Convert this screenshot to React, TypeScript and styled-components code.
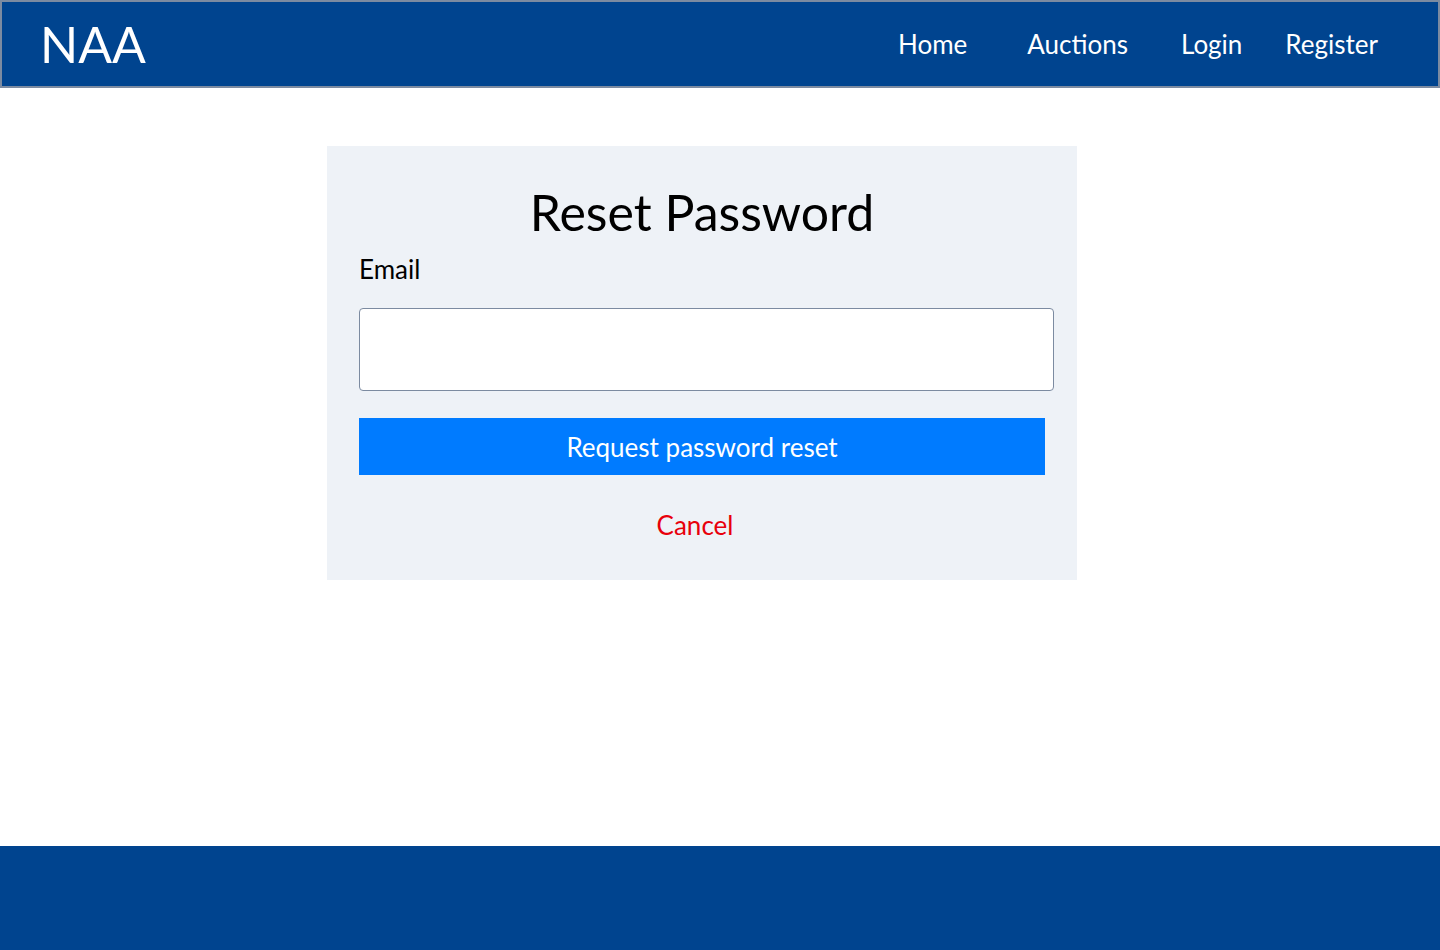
import React from "react";
import styled, { createGlobalStyle } from "styled-components";

const Global = createGlobalStyle`
  html, body { margin: 0; padding: 0; }
  body { font-family: Lato, "Open Sans", sans-serif; background: #ffffff; }
  * { box-sizing: border-box; }
`;

const Page = styled.div`
  min-height: 950px;
  display: flex;
  flex-direction: column;
`;

const Header = styled.header`
  height: 88px;
  background: #00448f;
  border: 2px solid #7c8ba1;
  display: flex;
  align-items: center;
  padding: 0 0 0 38px;
`;

const Brand = styled.a`
  font-size: 50px;
  color: #ffffff;
  text-decoration: none;
  line-height: 1;
`;

const Nav = styled.nav`
  margin-left: auto;
  display: flex;
  align-items: center;
  padding-right: 60px;
`;

const NavLink = styled.a<{ $gap: number }>`
  color: #ffffff;
  font-size: 26px;
  text-decoration: none;
  margin-left: ${(p) => p.$gap}px;
`;

const Main = styled.main`
  flex: 1;
  display: flex;
  justify-content: center;
  align-items: flex-start;
  padding: 58px 36px 0 0;
`;

const Card = styled.section`
  width: 750px;
  background: #eef2f7;
  padding: 36px 23px 39px 32px;
  display: flex;
  flex-direction: column;
`;

const Title = styled.h1`
  margin: 0 0 11px -9px;
  font-size: 50px;
  font-weight: 400;
  text-align: center;
  color: #000;
  line-height: 1.2;
`;

const Label = styled.label`
  font-size: 26px;
  color: #000;
  margin-bottom: 23px;
`;

const Input = styled.input`
  height: 83px;
  width: 695px;
  border: 1px solid #7c8ba1;
  border-radius: 4px;
  background: #fff;
  font-size: 24px;
  margin-bottom: 27px;
`;

const Submit = styled.button`
  width: 686px;
  height: 57px;
  border: none;
  background: #007bff;
  color: #fff;
  font-family: Lato, sans-serif;
  font-size: 26px;
  cursor: pointer;
`;

const CancelLink = styled.a`
  margin-top: 34px;
  align-self: center;
  margin-left: -23px;
  color: #e8000b;
  font-size: 26px;
  text-decoration: none;
`;

const Footer = styled.footer`
  height: 104px;
  background: #00448f;
`;

export default function App() {
  return (
    <Page>
      <Global />
      <Header>
        <Brand href="#">NAA</Brand>
        <Nav>
          <NavLink $gap={0} href="#">Home</NavLink>
          <NavLink $gap={60} href="#">Auctions</NavLink>
          <NavLink $gap={53} href="#">Login</NavLink>
          <NavLink $gap={43} href="#">Register</NavLink>
        </Nav>
      </Header>
      <Main>
        <Card>
          <Title>Reset Password</Title>
          <Label htmlFor="email">Email</Label>
          <Input id="email" type="email" />
          <Submit type="button">Request password reset</Submit>
          <CancelLink href="#">Cancel</CancelLink>
        </Card>
      </Main>
      <Footer />
    </Page>
  );
}
